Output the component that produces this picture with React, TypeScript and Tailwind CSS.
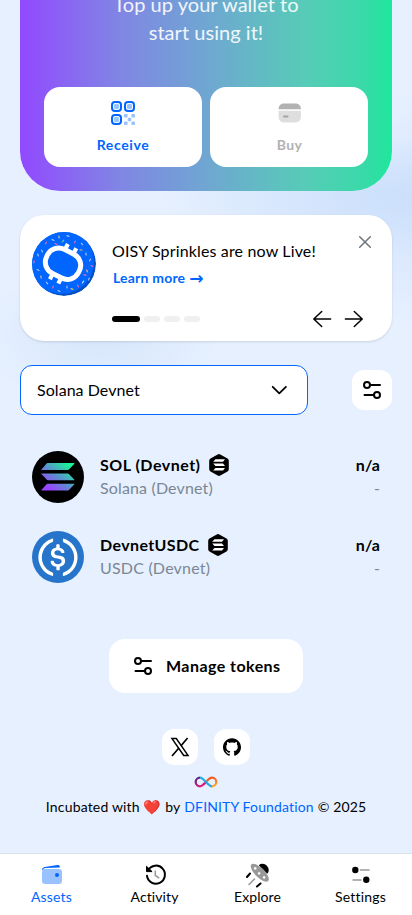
import React from "react";

const SPRINKLES: [number, number, number, string][] = [
  [10, 19, 60, "#a9c9ff"], [14, 11, 120, "#f06ab4"], [21, 8, 30, "#a9c9ff"], [27, 5, 80, "#f2c08a"],
  [36, 4, 20, "#a9c9ff"], [43, 10, 110, "#f06ab4"], [50, 12, 45, "#a9c9ff"], [49, 18, 10, "#f4b860"],
  [54, 22, 80, "#a9c9ff"], [58, 28, 120, "#a9c9ff"], [60, 34, 30, "#f06ab4"], [55, 39, 70, "#f2c08a"],
  [57, 47, 110, "#a9c9ff"], [51, 50, 120, "#d5e5ff"], [46, 54, 60, "#f06ab4"], [40, 57, 20, "#f4b860"],
  [35, 55, 90, "#a9c9ff"], [27, 59, 30, "#a9c9ff"], [21, 55, 110, "#f06ab4"], [15, 51, 50, "#a9c9ff"],
  [9, 45, 80, "#f2c08a"], [6, 38, 30, "#a9c9ff"], [2, 30, 110, "#f06ab4"], [6, 23, 70, "#a9c9ff"],
  [24, 12, 30, "#f06ab4"], [31, 9, 130, "#68d0cf"], [40, 46, 50, "#68d0cf"], [53, 43, 20, "#f06ab4"],
];

function Donut() {
  return (
    <svg viewBox="0 0 64 64" className="size-16 shrink-0">
      <defs>
        <clipPath id="disc"><circle cx="32" cy="32" r="32" /></clipPath>
      </defs>
      <g clipPath="url(#disc)">
        <circle cx="32" cy="32" r="32" fill="#0351c4" />
        <circle cx="29.5" cy="29.5" r="32.5" fill="#0066ff" />
        {SPRINKLES.map(([x, y, a, c], i) => (
          <rect key={i} x={x - 1.6} y={y - 0.55} width="3.2" height="1.1" rx=".5" fill={c} transform={`rotate(${a} ${x} ${y})`} />
        ))}
        <g transform="translate(31 31.7) rotate(27)" fill="none" stroke="#fff">
          <rect x="-17.8" y="-13.4" width="35.6" height="26.8" rx="12.4" strokeWidth="5" />
          <path d="M-4.6-19.800v6M4.800-19.800v6M-4.600 19.800v-6M4.800 19.800v-6" strokeWidth="4.200" />
        </g>
      </g>
    </svg>
  );
}

function QrIcon() {
  return (
    <svg viewBox="0 0 24 24" className="size-6" fill="none">
      {[[1, 1], [14, 1], [1, 14]].map(([x, y]) => (
        <g key={`${x}${y}`}>
          <rect x={x} y={y} width="9" height="9" rx="3" stroke="#0066ff" strokeWidth="2" />
          <rect x={x + 1.8} y={y + 1.8} width="5.400" height="5.400" rx="2.200" fill="#99c2ff" />
        </g>
      ))}
      <g fill="#99c2ff">
        <rect x="13" y="13" width="3.600" height="3.600" rx="1" />
        <rect x="20.400" y="13" width="3.600" height="3.600" rx="1" />
        <rect x="16.700" y="16.700" width="3.600" height="3.600" rx="1" />
        <rect x="13" y="20.400" width="3.600" height="3.600" rx="1" />
        <rect x="20.400" y="20.400" width="3.600" height="3.600" rx="1" />
      </g>
    </svg>
  );
}

function CardIcon() {
  return (
    <svg viewBox="0 0 24 24" className="ml-px size-6">
      <path d="M.6 8.200C.6 4.600 2.600 2.400 5.800 2.400h11.900c3.200 0 5.200 2.200 5.200 5.800z" fill="#b2b2b2" />
      <path d="M.6 9.800h22.300v5.800c0 3.600-2 5.800-5.200 5.800H5.800c-3.200 0-5.200-2.200-5.200-5.800z" fill="#dedede" />
      <rect x="5" y="14.600" width="5.500" height="1.800" rx=".9" fill="#a3a3a3" />
    </svg>
  );
}

function SlidersIcon() {
  return (
    <svg viewBox="0 0 20 20" className="size-5" fill="none" stroke="#000" strokeWidth="2" strokeLinecap="round">
      <circle cx="5" cy="5" r="3" />
      <path d="M9 5h9M2.500 15h9" />
      <circle cx="15" cy="15" r="3" />
    </svg>
  );
}

function ArrowIcon({ flip }: { flip?: boolean }) {
  return (
    <svg
      viewBox="0 0 24 24"
      className={flip ? "size-6 rotate-180" : "size-6"}
      fill="none"
      stroke="#000"
      strokeWidth="1.500"
      strokeLinecap="round"
      strokeLinejoin="round"
    >
      <path d="M4 12h16.600M11.700 4.500 3.800 12l7.900 7.500" />
    </svg>
  );
}

function CloseIcon() {
  return (
    <svg viewBox="0 0 20 20" className="mr-[5px] size-5" fill="none" stroke="#6c757d" strokeWidth="1.500" strokeLinecap="round">
      <path d="m4.700 4.700 10.600 10.600M15.300 4.700 4.700 15.300" />
    </svg>
  );
}

function ChevronIcon() {
  return (
    <svg viewBox="0 0 24 24" className="size-6" fill="none" stroke="#000" strokeWidth="1.800" strokeLinecap="round" strokeLinejoin="round">
      <path d="m5.700 8.800 6.600 6.500 6.600-6.500" />
    </svg>
  );
}

function SolanaLogo() {
  return (
    <svg viewBox="0 0 52 52" className="size-13 shrink-0">
      <defs>
        <linearGradient id="sol" gradientUnits="userSpaceOnUse" x1="13" y1="42" x2="39" y2="10">
          <stop stopColor="#9945ff" />
          <stop offset=".15" stopColor="#9945ff" />
          <stop offset=".5" stopColor="#5c8fcf" />
          <stop offset=".9" stopColor="#19f598" />
        </linearGradient>
      </defs>
      <circle cx="26" cy="26" r="26" />
      <path d="M15.500 12.100h26.300c.5 0 .7.500.4.800l-5.300 5.600c-.3.300-.6.500-1.100.5H10c-.5 0-.7-.5-.4-.8l5-5.600c.3-.3.500-.5.900-.5zM10 22.400h25.800c.5 0 .8.200 1.100.5l5.300 5.600c.3.300.1.800-.4.800H16c-.5 0-.8-.2-1.100-.5l-5.300-5.600c-.3-.3-.1-.8.4-.8zM15.500 32.800h26.300c.5 0 .7.500.4.800l-5.300 5.500c-.3.300-.6.500-1.100.5H10c-.5 0-.7-.5-.4-.8l5-5.500c.3-.3.500-.5.900-.5z" fill="url(#sol)" />
    </svg>
  );
}

function UsdcLogo() {
  return (
    <svg viewBox="0 0 2000 2000" className="size-13 shrink-0" fill="#fff">
      <circle cx="1000" cy="1000" r="1000" fill="#2775ca" />
      <path d="M1275 1158.330c0-145.830-87.500-195.830-262.500-216.660-125-16.670-150-50-150-108.340s41.670-95.830 125-95.830c75 0 116.670 25 137.500 87.500 4.170 12.500 16.670 20.830 29.170 20.830h66.660c16.670 0 29.170-12.500 29.170-29.160v-4.170c-16.670-91.670-91.670-162.500-187.500-170.830v-100c0-16.670-12.500-29.170-33.330-33.340h-62.500c-16.670 0-29.170 12.500-33.340 33.340v95.830c-125 16.670-204.160 100-204.160 204.170 0 137.500 83.330 191.660 258.330 212.500 116.670 20.830 154.170 45.830 154.170 112.500s-58.340 112.500-137.500 112.500c-108.340 0-145.840-45.840-158.340-108.340-4.160-16.660-16.660-25-29.160-25h-70.840c-16.660 0-29.160 12.500-29.160 29.170v4.170c16.660 104.160 83.330 179.160 220.830 200v100c0 16.660 12.500 29.160 33.330 33.330h62.500c16.670 0 29.170-12.500 33.340-33.330v-100c125-20.840 208.330-108.340 208.330-220.840z" />
      <path d="M787.500 1595.830c-325-116.660-491.670-479.160-370.830-800 62.500-175 200-308.330 370.830-370.830 16.670-8.330 25-20.830 25-41.670V325c0-16.670-8.330-29.170-25-33.330-4.170 0-12.500 0-16.670 4.160-395.830 125-612.500 545.840-487.500 941.670 75 233.330 254.170 412.500 487.500 487.500 16.670 8.330 33.340 0 37.500-16.670 4.170-4.160 4.170-8.330 4.170-16.660v-58.340c0-12.500-12.500-29.160-25-37.500zM1229.170 295.830c-16.670-8.330-33.340 0-37.500 16.670-4.170 4.170-4.170 8.330-4.170 16.670v58.330c0 16.670 12.500 33.330 25 41.670 325 116.660 491.670 479.160 370.830 800-62.500 175-200 308.330-370.830 370.830-16.670 8.330-25 20.830-25 41.670V1700c0 16.670 8.330 29.170 25 33.330 4.170 0 12.500 0 16.670-4.160 395.830-125 612.500-545.840 487.500-941.670-75-237.500-258.340-416.670-487.500-491.670z" />
    </svg>
  );
}

function NetworkBadge() {
  return (
    <svg viewBox="0 0 20 22" className="h-[22px] w-5 shrink-0">
      <path d="M8.700.5a2.600 2.600 0 0 1 2.600 0l7.200 4a2.600 2.600 0 0 1 1.300 2.300v8.400a2.600 2.600 0 0 1-1.300 2.300l-7.200 4a2.600 2.600 0 0 1-2.600 0l-7.200-4A2.600 2.600 0 0 1 .2 15.200V6.800a2.600 2.600 0 0 1 1.300-2.300z" />
      <path d="M6.500 5.300h9.500l-2 2.500H4.200zM4.200 9.600H14l2 2.500H6.500zM6.500 13.900h9.500l-2 2.500H4.200z" fill="#fff" />
    </svg>
  );
}

function XLogo() {
  return (
    <svg viewBox="0 0 20 20" className="size-5" fill="none" stroke="#000" strokeWidth="1.500">
      <path d="M2 1.600h4.300l11.700 16.800h-4.300z" />
      <path d="M17.600 1 11 8.700M8.700 11.300 2 19" strokeWidth="1.700" />
    </svg>
  );
}

function GithubMark() {
  return (
    <svg viewBox="0 0 24 24" className="size-[18px]">
      <path d="M12 .297c-6.630 0-12 5.373-12 12 0 5.303 3.438 9.800 8.205 11.385.6.113.82-.258.82-.577 0-.285-.01-1.040-.015-2.040-3.338.724-4.042-1.610-4.042-1.610C4.422 18.070 3.633 17.700 3.633 17.700c-1.087-.744.084-.729.084-.729 1.205.084 1.838 1.236 1.838 1.236 1.070 1.835 2.809 1.305 3.495.998.108-.776.417-1.305.76-1.605-2.665-.3-5.466-1.332-5.466-5.930 0-1.310.465-2.380 1.235-3.220-.135-.303-.54-1.523.105-3.176 0 0 1.005-.322 3.300 1.230.96-.267 1.980-.399 3-.405 1.020.006 2.040.138 3 .405 2.280-1.552 3.285-1.230 3.285-1.230.645 1.653.24 2.873.12 3.176.765.840 1.230 1.910 1.230 3.220 0 4.610-2.805 5.625-5.475 5.920.42.360.81 1.096.81 2.220 0 1.606-.015 2.896-.015 3.286 0 .315.21.690.825.570C20.565 22.092 24 17.592 24 12.297c0-6.627-5.373-12-12-12" />
    </svg>
  );
}

function InfinityLogo() {
  return (
    <svg viewBox="0 0 24 12" className="h-3 w-6" fill="none" strokeWidth="2.300">
      <defs>
        <linearGradient id="ol" x1=".7" y1="0" x2="1" y2="1">
          <stop stopColor="#f15a24" /><stop offset="1" stopColor="#fbb03b" />
        </linearGradient>
        <linearGradient id="pk" x1="0" y1="0" x2=".7" y2="1">
          <stop stopColor="#522785" /><stop offset="1" stopColor="#ed1e79" />
        </linearGradient>
      </defs>
      <path d="M12 6c2-2.200 3.800-4.300 6-4.300a4.300 4.300 0 0 1 0 8.600" stroke="url(#ol)" />
      <path d="M12 6c-2 2.200-3.800 4.300-6 4.300a4.300 4.300 0 0 1 0-8.600" stroke="url(#pk)" />
      <path d="M6 1.700C10 1.700 14 10.300 18 10.300" stroke="#29abe2" />
    </svg>
  );
}

function WalletIcon() {
  return (
    <svg viewBox="0 0 24 24" className="size-6">
      <rect x="2" y="6" width="20" height="15" rx="3.200" fill="#99c2ff" />
      <path d="M2 7.500C2 5.400 3 4.300 4.700 4L17.500 2c1.200-.2 2.100.5 2.300 1.500l.1.900-14.400.6C4 5.200 3.200 6 2 7.500z" fill="#0066ff" />
      <circle cx="17" cy="12" r="2" fill="#0066ff" />
    </svg>
  );
}

function HistoryIcon() {
  return (
    <svg viewBox="0 0 24 24" className="ml-0.5 size-6" fill="none" strokeWidth="2">
      <path d="M4.200 7A9 9 0 1 1 3 12.800" stroke="#000" strokeLinecap="round" />
      <path d="M2.500 3.300v5.300h5.600z" fill="#000" stroke="#000" strokeWidth="1" strokeLinejoin="round" />
      <path d="M11.300 7.500v5l4 2.600" stroke="#999" strokeWidth="1.500" />
    </svg>
  );
}

function UfoIcon() {
  return (
    <svg viewBox="0 0 24 24" className="size-6 overflow-visible">
      <g transform="translate(14.500 9) rotate(45)">
        <path d="M-6-3.600a6 5.400 0 0 1 12 0z" fill="#000" />
        <ellipse cx="0" cy="1" rx="11.800" ry="4.800" fill="#999" />
        <circle cx="-6.300" cy="1.200" r="1.300" fill="#fff" />
        <circle cx="0" cy="2" r="1.300" fill="#fff" />
        <circle cx="6.300" cy="1.200" r="1.300" fill="#fff" />
      </g>
      <path d="M4 10.500 1 14M14.500 20.500 11 23.500" stroke="#000" strokeWidth="2" strokeLinecap="round" />
      <path d="M8.500 16 3 21.500" stroke="#999" strokeWidth="1.600" strokeLinecap="round" />
    </svg>
  );
}

function TogglesIcon() {
  return (
    <svg viewBox="0 0 24 24" className="size-6">
      <path d="M11.500 7H20M4 17h8" stroke="#999" strokeWidth="1.500" strokeLinecap="round" />
      <circle cx="6.300" cy="7" r="3.200" />
      <circle cx="17.300" cy="16.800" r="3.200" />
    </svg>
  );
}

function TokenRow(p: { logo: React.ReactNode; name: React.ReactNode; sub: React.ReactNode }) {
  return (
    <div className="flex h-20 items-center px-3">
      {p.logo}
      <div className="-mt-0.5 ml-4 flex-1">
        <div className="flex h-6 items-center gap-2 text-base font-bold">
          {p.name}
          <NetworkBadge />
        </div>
        <div className="h-[22px] leading-[22px] text-[#7b8794]">{p.sub}</div>
      </div>
      <div className="-mt-0.5 text-right">
        <div className="h-6 leading-6 font-bold tracking-[0.1px]">n/a</div>
        <div className="h-[22px] leading-[22px] text-[#7b8794]">-</div>
      </div>
    </div>
  );
}

export default function App() {
  return (
    <div className="flex h-[915px] w-full flex-col overflow-hidden bg-[#e6f0ff] bg-[radial-gradient(ellipse_270px_60px_at_430px_198px,#cbdffb_0%,#cfe2fccc_45%,transparent_100%),radial-gradient(ellipse_100px_120px_at_430px_210px,#d3e4fd_0%,transparent_100%),radial-gradient(ellipse_120px_70px_at_100px_335px,#d6e6fb_0%,transparent_100%)] font-['Lato','Liberation_Sans',sans-serif] text-black">
      <main className="flex flex-1 flex-col px-5">
        <section className="h-[191px] shrink-0 overflow-hidden rounded-b-[40px] bg-[linear-gradient(90deg,#9249ff_0%,#8086e4_27%,#6ea9d0_52%,#56ccb7_77%,#3ad9a9_92%,#1ee79c_100%)] px-6">
          <div className="-mt-2.5 text-center text-xl leading-7 text-white/90">
            <div className="tracking-[0.04px]">Top up your wallet to</div>
            <div className="tracking-[0.04px]">start using it!</div>
          </div>
          <div className="mt-[41px] grid grid-cols-2 gap-2 text-sm font-bold">
            <button className="flex h-20 flex-col items-center rounded-2xl bg-white pt-3.5 text-[#0066ff]">
              <QrIcon />
              <span className="mt-2.5 leading-5 tracking-[0.6px]">Receive</span>
            </button>
            <button className="flex h-20 flex-col items-center rounded-2xl bg-white pt-3.5 text-[#b2b2b2]">
              <CardIcon />
              <span className="mt-2.5 ml-px leading-5 tracking-[0.3px]">Buy</span>
            </button>
          </div>
        </section>

        <section className="mt-6 flex h-[126px] shrink-0 rounded-3xl bg-white px-3 pt-[17px] shadow-sm">
          <Donut />
          <div className="ml-4 flex flex-1 flex-col">
            <div className="flex">
              <div className="flex-1">
                <div className="mt-[7px] h-6 leading-6 tracking-[0.15px]">OISY Sprinkles are now Live!</div>
                <div className="mt-[3px] ml-px flex items-center gap-1 text-sm leading-6 font-bold text-[#0066ff]">
                  <span className="tracking-[0.2px]">Learn more</span>
                  <span className="font-['DejaVu_Sans'] text-[17px]">→</span>
                </div>
              </div>
              <CloseIcon />
            </div>
            <div className="mt-[17px] flex h-6 items-center">
              <div className="flex flex-1 gap-1">
                <span className="h-1.5 w-7 rounded-full bg-black" />
                <span className="h-1.5 w-4 rounded-full bg-[#f0f0f0]" />
                <span className="h-1.5 w-4 rounded-full bg-[#f0f0f0]" />
                <span className="h-1.5 w-4 rounded-full bg-[#f0f0f0]" />
              </div>
              <div className="mr-3.5 flex gap-2">
                <ArrowIcon />
                <ArrowIcon flip />
              </div>
            </div>
          </div>
        </section>

        <section className="mt-6 flex items-center justify-between">
          <button className="flex h-[50px] w-72 items-center justify-between rounded-xl border border-[#0066ff] bg-white px-4">
            <span className="tracking-[0.05px]">Solana Devnet</span>
            <ChevronIcon />
          </button>
          <button className="flex size-10 items-center justify-center rounded-xl bg-white">
            <SlidersIcon />
          </button>
        </section>

        <section className="mt-[22px]">
          <TokenRow
            logo={<SolanaLogo />}
            name={<span className="tracking-[0.5px]">SOL (Devnet)</span>}
            sub={<span className="tracking-[0.15px]">Solana (Devnet)</span>}
          />
          <TokenRow
            logo={<UsdcLogo />}
            name={<span className="tracking-[0.4px]">DevnetUSDC</span>}
            sub={<span className="tracking-[0.2px]">USDC (Devnet)</span>}
          />
        </section>

        <button className="mt-[42px] flex h-[54px] w-[194px] shrink-0 items-center gap-[13px] self-center rounded-2xl bg-white pl-6 font-bold">
          <SlidersIcon />
          <span className="tracking-[0.45px] whitespace-nowrap">Manage tokens</span>
        </button>

        <footer className="mt-9 flex flex-col items-center">
          <div className="flex gap-4">
            <a className="flex size-9 items-center justify-center rounded-xl bg-white"><XLogo /></a>
            <a className="flex size-9 items-center justify-center rounded-xl bg-white"><GithubMark /></a>
          </div>
          <div className="mt-[11px]"><InfinityLogo /></div>
          <p className="mt-[9px] flex gap-1 text-sm leading-5 whitespace-nowrap">
            <span className="tracking-[0.17px]">Incubated with</span>
            <span className="font-['Noto_Color_Emoji']">❤️</span>
            <span className="tracking-[0.1px]">by</span>
            <a className="tracking-[0.15px] text-[#0066ff]">DFINITY Foundation</a>
            <span className="tracking-[0.1px]">© 2025</span>
          </p>
        </footer>
      </main>

      <nav className="grid h-[62px] shrink-0 grid-cols-4 border-t border-[#d9e0ea] bg-white pt-[9px] text-sm leading-5">
        <a className="flex flex-col items-center text-[#0066ff]"><WalletIcon /><span className="tracking-[0.2px]">Assets</span></a>
        <a className="flex flex-col items-center"><HistoryIcon /><span className="tracking-[0.1px]">Activity</span></a>
        <a className="flex flex-col items-center"><UfoIcon /><span className="tracking-[0.1px]">Explore</span></a>
        <a className="flex flex-col items-center"><TogglesIcon /><span className="tracking-[0.2px]">Settings</span></a>
      </nav>
    </div>
  );
}
